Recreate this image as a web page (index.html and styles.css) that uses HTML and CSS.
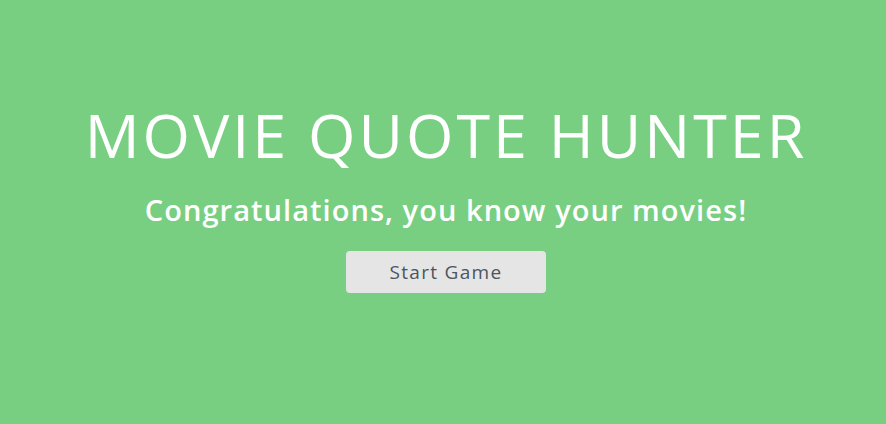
FILE: index.html
```html
<!DOCTYPE html>
<html>
<head>
<meta charset="utf-8">
<link rel="stylesheet" href="styles.css">
</head>
<body>
<main class="screen">
  <h1 class="title">MOVIE QUOTE HUNTER</h1>
  <p class="message">Congratulations, you know your movies!</p>
  <button class="start">Start Game</button>
</main>
</body>
</html>
```
FILE: styles.css
```css
html, body {
  margin: 0;
  padding: 0;
  height: 100%;
}
body {
  background: #78cf82;
  font-family: "Open Sans", "DejaVu Sans", sans-serif;
}
.screen {
  display: flex;
  flex-direction: column;
  align-items: center;
  padding: 98px 0 0 6px;
}
.title {
  margin: 0;
  color: #ffffff;
  font-weight: 400;
  font-size: 61px;
  line-height: 74px;
  letter-spacing: 3px;
}
.message {
  margin: 20px 0 0;
  color: #ffffff;
  font-weight: 600;
  font-size: 29px;
  line-height: 36px;
  letter-spacing: 1.05px;
}
.start {
  margin-top: 23px;
  width: 200px;
  height: 42px;
  border: none;
  border-radius: 4px;
  background: #e5e5e5;
  color: #4b5560;
  font-family: "Open Sans", "DejaVu Sans", sans-serif;
  font-size: 19px;
  font-weight: 400;
  letter-spacing: 1.3px;
  padding: 0;
}
```
